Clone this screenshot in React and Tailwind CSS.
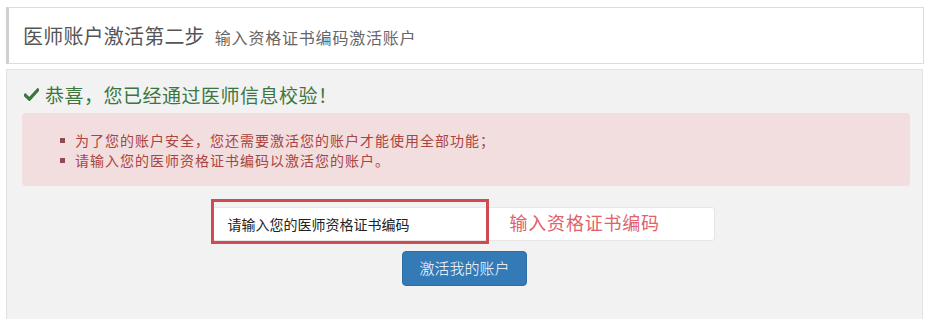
import React from 'react';

const font = { fontFamily: '"Noto Sans CJK SC", "Noto Sans", sans-serif' };

const CheckIcon = () => (
  <svg width="15" height="13" viewBox="0 0 15 13" className="shrink-0">
    <path d="M1.2 7.2 L5.4 11.2 L13.8 2" fill="none" stroke="#3c763d" strokeWidth="3.2" strokeLinecap="square" />
  </svg>
);

const App = () => {
  return (
    <div className="w-[926px] h-[319px] bg-white overflow-hidden pt-[7px] pl-[6px] pr-[2px]" style={font}>
      {/* Step header */}
      <div className="h-[57px] bg-white border border-[#dcdcdc] border-l-[3px] border-l-[#d0d0d0] flex items-center pl-[14px] gap-[10px]">
        <span className="text-[20px] text-[#555] leading-none tracking-[0.2px]">医师账户激活第二步</span>
        <span className="text-[16px] text-[#666] leading-none mt-[2px] tracking-[0.8px]">输入资格证书编码激活账户</span>
      </div>

      {/* Body */}
      <div className="mt-[5px] mr-[1px] h-[260px] bg-[#f2f2f3] border border-[#e2e2e2] px-[15px] pt-[11px]">
        <div className="flex items-center gap-[6px] pl-[2px] h-[26px]">
          <CheckIcon />
          <span className="text-[19px] text-[#3c763d] leading-none tracking-[0.5px]">恭喜，您已经通过医师信息校验！</span>
        </div>

        <div className="mt-[6px] mr-[-3px] h-[73px] bg-[#f2dede] rounded-[4px] pt-[17px] pl-[38px] text-[14px] leading-[20px] text-[#a94442] tracking-[1px]">
          <ul>
            <li className="flex items-center gap-[10px]">
              <span className="w-[5px] h-[5px] bg-[#8f4a52] shrink-0" />
              为了您的账户安全，您还需要激活您的账户才能使用全部功能；
            </li>
            <li className="flex items-center gap-[10px]">
              <span className="w-[5px] h-[5px] bg-[#8f4a52] shrink-0" />
              请输入您的医师资格证书编码以激活您的账户。
            </li>
          </ul>
        </div>

        <div className="flex flex-col items-center mt-[21px]">
          <div className="relative w-[504px] h-[34px] bg-white border border-[#e6e6e6] rounded-[3px] flex items-center pl-[16px] ml-[-4px]">
            <span className="text-[14px] text-[#222]">请输入您的医师资格证书编码</span>
            <div className="absolute left-[-1px] top-[-9px] w-[278px] h-[45px] border-[3px] border-[#cf4a51]" />
            <span className="absolute left-[298px] top-[1px] text-[18px] text-[#e0626a] tracking-[0.8px]">输入资格证书编码</span>
          </div>
          <button className="mt-[10px] w-[125px] h-[35px] bg-[#337ab7] border border-[#2e6da4] rounded-[4px] text-white text-[15px] font-light">
            激活我的账户
          </button>
        </div>
      </div>
    </div>
  );
};

export default App;
